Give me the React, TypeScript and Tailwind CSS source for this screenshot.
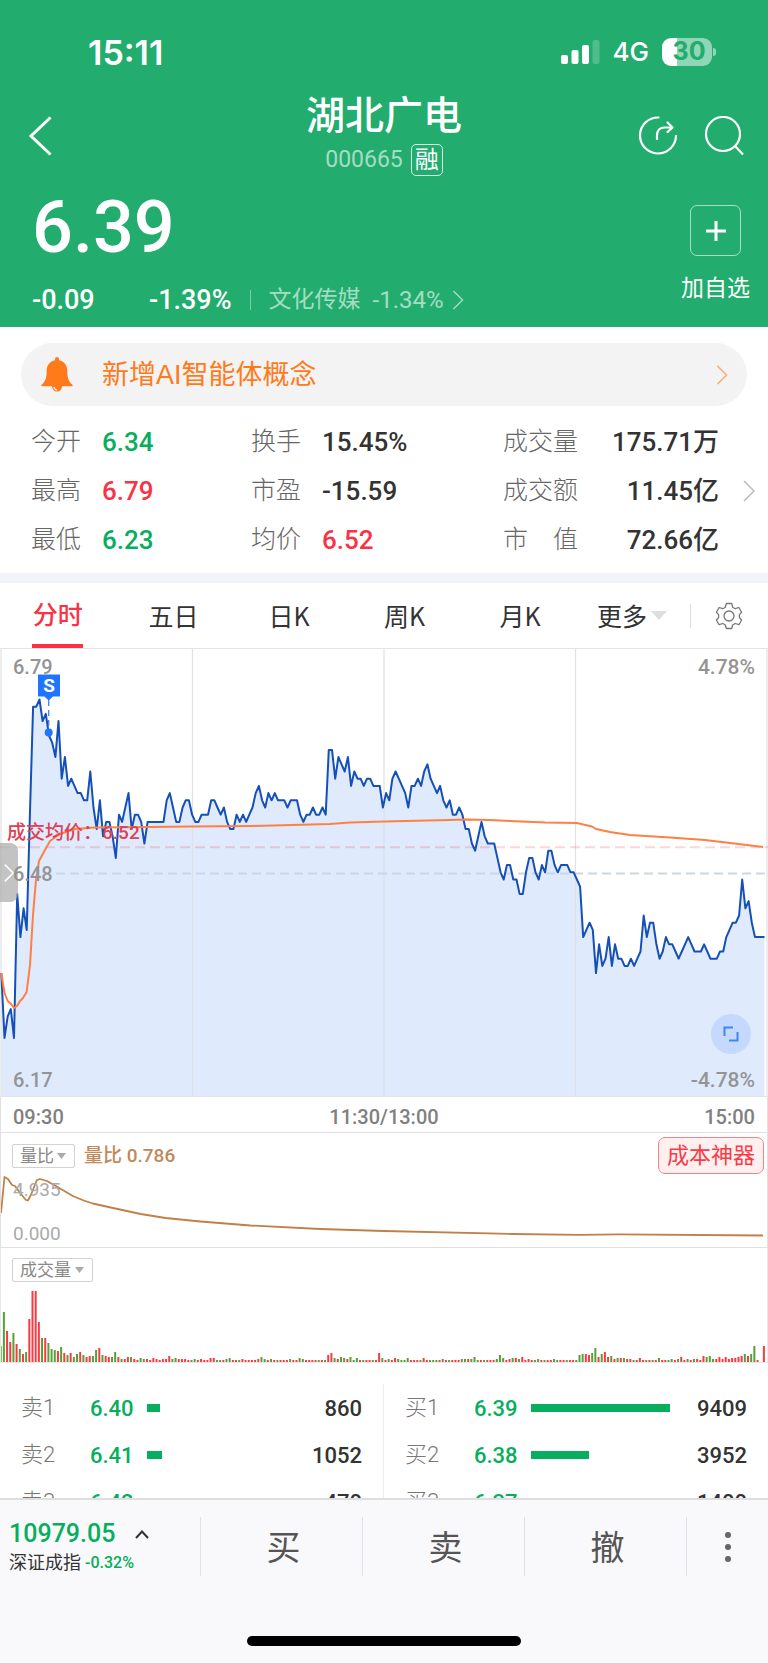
import React from "react";

const PRICES = [
  634, 625, 628, 629, 625, 645, 639, 643, 640, 656, 671, 671, 672, 669, 670, 667, 666, 664, 669, 661,
  664, 660, 661, 660, 659, 659, 658, 658, 662, 657, 654, 658, 653, 655, 655, 653, 650, 656, 655, 657,
  659, 654, 656, 656, 655, 652, 655, 655, 655, 655, 655, 655, 658, 659, 657, 655, 655, 657, 658, 658,
  656, 655, 655, 656, 656, 656, 658, 658, 657, 656, 657, 655, 654, 654, 656, 655, 656, 655, 656, 657,
  659, 660, 658, 657, 659, 658, 659, 658, 658, 658, 657, 658, 658, 658, 656, 655, 656, 656, 657, 656,
  656, 657, 656, 665, 665, 661, 664, 663, 662, 664, 660, 662, 661, 661, 660, 661, 661, 660, 660, 660,
  657, 659, 658, 661, 662, 661, 660, 659, 657, 660, 660, 661, 660, 662, 663, 661, 660, 659, 660, 658,
  657, 658, 656, 656, 657, 656, 654, 654, 652, 651, 653, 655, 653, 652, 652, 652, 650, 648, 647, 649,
  649, 647, 647, 645, 645, 648, 650, 650, 648, 647, 649, 648, 651, 651, 649, 648, 649, 649, 649, 648,
  648, 647, 646, 639, 640, 641, 640, 634, 638, 635, 636, 639, 635, 638, 636, 636, 635, 635, 636, 635,
  636, 637, 642, 639, 641, 641, 638, 636, 637, 639, 638, 638, 637, 636, 637, 638, 639, 638, 637, 637,
  637, 638, 637, 636, 636, 636, 637, 637, 639, 640, 641, 641, 642, 647, 643, 644, 641, 639, 639, 639,
  639,
];

// Positive bars are red (up minutes), negative bars are green (down minutes).
const VOLUMES = [
  -16, -50, 31, 20, -29, 18, -13, 8, -10, 43, 71, 71, 40, -24, 24, -19, -13, -12, 11, -15,
  9, -7, 9, -5, -8, 10, -7, 5, 6, -6, -12, 14, -7, 6, 5, -5, -10, 5, -3, 3,
  5, -5, 3, 2, -4, -3, 3, 2, 4, 3, 2, 3, 3, 6, -3, -4, 3, 3, 3, 2,
  -2, -3, 2, 3, 2, 2, 4, 4, -2, -2, 2, -3, -4, 2, 2, -2, 3, 2, 2, 2,
  2, 3, -5, -3, 2, -3, 2, -2, 2, 2, 2, -3, 2, 2, -4, -3, 2, 2, 2, 2,
  -2, 2, -2, 7, 9, -4, 3, -5, -4, 3, -5, -2, -4, 2, -2, 2, 2, -2, 2, 9,
  -4, 2, -3, 2, 4, -3, -2, -2, -4, 2, 2, 2, -2, 4, 2, -2, -2, -2, 2, -3,
  2, -2, 2, 2, 2, -3, -3, 3, -3, -5, -2, 2, -2, 2, 2, 2, -3, -7, -4, 2,
  3, -4, 4, -3, 5, 2, 3, 2, -2, -3, 2, -2, 2, 2, -3, -2, 2, 2, -2, 2,
  2, -2, -7, -8, 8, 7, -9, -14, 5, -8, 10, 5, -6, 3, -4, 4, -4, 3, 3, -2,
  2, 4, 2, -2, 2, -2, 2, -4, 2, 2, -2, -3, 2, -3, 5, 2, -3, 2, -3, 3,
  2, 6, -5, -6, -3, 3, 5, 3, 5, 3, 4, 4, 5, 6, -8, 6, -8, -16, 2, 0, 16,
];

const STEP = 3.18;
const pricePoints = PRICES.map((p, i) => `${(1.3 + i * STEP).toFixed(1)},${(224.3 - (p - 648) * 7.2).toFixed(1)}`).join(" ");

const stats = [
  ["今开", "6.34", "text-[#06ae5e]", "换手", "15.45%", "text-[#333]", "成交量", "175.71万"],
  ["最高", "6.79", "text-[#fa3246]", "市盈", "-15.59", "text-[#333]", "成交额", "11.45亿"],
  ["最低", "6.23", "text-[#06ae5e]", "均价", "6.52", "text-[#fa3246]", "市　值", "72.66亿"],
];

const sells = [
  { name: "卖1", price: "6.40", volume: 860 },
  { name: "卖2", price: "6.41", volume: 1052 },
  { name: "卖3", price: "6.42", volume: 470 },
];
const buys = [
  { name: "买1", price: "6.39", volume: 9409 },
  { name: "买2", price: "6.38", volume: 3952 },
  { name: "买3", price: "6.37", volume: 1400 },
];

function Chevron({ className, width = 2 }: { className: string; width?: number }) {
  return (
    <svg viewBox="0 0 12 22" className={className} fill="none" stroke="currentColor" strokeWidth={width} aria-hidden="true">
      <path d="M1 1l10 10L1 21" />
    </svg>
  );
}

function Header() {
  return (
    <header className="h-[327px] shrink-0 bg-[#22ac6e] text-white">
      <div className="flex h-[84px] items-end justify-between pr-[52px] pl-[88px]">
        <span className="flex h-[64px] items-center font-['Inter','Liberation_Sans',sans-serif] text-[34px] font-semibold">15:11</span>
        <div className="flex h-[64px] items-center gap-[13px]">
          <svg viewBox="0 0 39 25" className="h-[25px] w-[39px]" fill="currentColor" aria-label="信号">
            <rect x="0" y="15" width="7" height="9" rx="2" />
            <rect x="10.500" y="10" width="7" height="14" rx="2" />
            <rect x="21" y="5" width="7" height="19" rx="2" />
            <rect x="31.500" y="0" width="7" height="24" rx="2" opacity=".2" />
          </svg>
          <span className="font-['Inter','Liberation_Sans',sans-serif] text-[26px] leading-8 font-medium">4G</span>
          <div className="flex items-center gap-px">
            <div className="flex h-7 w-[50px] items-center justify-center rounded-[9px] bg-linear-to-r from-white from-30% to-white/50 to-30% pl-1 font-['Inter','Liberation_Sans',sans-serif] text-[25px] font-bold text-[#22ac6e]">30</div>
            <div className="h-2 w-[3px] rounded-r-full bg-white/50" />
          </div>
        </div>
      </div>

      <div className="grid h-[104px] grid-cols-[1fr_auto_1fr] items-center px-6">
        <button type="button" aria-label="返回" className="flex w-12 items-center pl-1">
          <svg viewBox="0 0 24 40" className="h-10 w-6" fill="none" stroke="currentColor" strokeWidth="3" aria-hidden="true">
            <path d="M22.500 1.500L3 20l19.500 18.500" />
          </svg>
        </button>
        <div className="flex flex-col items-center pb-2">
          <h1 className="text-[39px] leading-[56px] font-medium">湖北广电</h1>
          <div className="flex items-center gap-2">
            <span className="text-[23px] leading-8 text-white/60">000665</span>
            <span className="flex h-8 w-8 items-center justify-center rounded-[5px] border border-white/80 text-[24px] leading-8">融</span>
          </div>
        </div>
        <div className="flex items-center justify-end gap-[26px]">
          <button type="button" aria-label="分享">
            <svg viewBox="0 0 40 40" className="size-10" fill="none" stroke="currentColor" strokeWidth="2.200" strokeLinecap="round" strokeLinejoin="round" aria-hidden="true">
              <path d="M20.500 1.500A18 18 0 1 0 38 20" />
              <path d="M19 23v-3.500c0-5 3-8 7.500-8H34M29.500 6.500L34.500 11.500l-5 4.500" />
            </svg>
          </button>
          <button type="button" aria-label="搜索">
            <svg viewBox="0 0 40 40" className="size-10" fill="none" stroke="currentColor" strokeWidth="2.200" aria-hidden="true">
              <circle cx="19" cy="18" r="17" />
              <path d="M31 30l8 8.500" />
            </svg>
          </button>
        </div>
      </div>

      <div className="flex justify-between pr-[18px] pl-8">
        <div>
          <p className="pt-1 text-[72px] leading-[72px] font-medium">6.39</p>
          <div className="flex h-[72px] items-center text-[27px] font-medium">
            <span className="w-[117px]">-0.09</span>
            <span>-1.39%</span>
            <span className="mx-[18px] h-5 w-px bg-white/40" />
            <a href="#sector" className="flex items-center gap-3 text-[24px] font-normal text-white/60">
              <span className="text-[23px]">文化传媒</span>
              <span className="flex items-center gap-2">-1.34%<Chevron className="h-5 w-3" width={1.5} /></span>
            </a>
          </div>
        </div>
        <button type="button" className="flex flex-col items-center gap-[15px] self-start pt-[17px]">
          <span className="flex size-[51px] items-center justify-center rounded-[7px] border border-white/60">
            <svg viewBox="0 0 20 20" className="size-5" stroke="currentColor" strokeWidth="3" aria-hidden="true"><path d="M10 0v20M0 10h20" /></svg>
          </span>
          <span className="text-[23px] leading-9">加自选</span>
        </button>
      </div>
    </header>
  );
}

function Alert() {
  return (
    <a href="#alert" className="mx-[21px] mt-4 flex h-[63px] items-center rounded-full bg-[#f3f3f3] pr-[19px] pl-5 text-[27px] text-[#ff7a1a]">
      <svg viewBox="0 0 32 35" className="h-[35px] w-8" fill="currentColor" aria-hidden="true">
        <path d="M16 0c1.200 0 2 .8 2 2v1.200c5 1 8.300 5 8.300 10 0 7.500 1.200 11.300 4.900 14.300.9.800.5 1.800-.6 1.800H1.400c-1.100 0-1.500-1-.6-1.800 3.700-3 4.900-6.800 4.900-14.300 0-5 3.300-9 8.300-10V2c0-1.200.8-2 2-2z" />
        <path d="M11 29h10c0 3.500-2 5.500-5 5.500s-5-2-5-5.500z" />
        <path d="M13 30c.2 2 1.300 3 3 3.200" fill="none" stroke="#fff" strokeWidth="1.200" />
      </svg>
      <span className="ml-[29px] flex-1 pt-[2px] font-['Liberation_Sans','Noto_Sans_CJK_SC',sans-serif]">新增AI智能体概念</span>
      <Chevron className="h-5 w-3 text-[#ffad78]" width={1.7} />
    </a>
  );
}

function Stats() {
  return (
    <div className="flex items-center pt-[11px] pb-[9px]">
      <table className="ml-[31px] flex-1 table-fixed text-left text-[25px]">
        <tbody>
          {stats.map((r) => (
            <tr key={r[0]} className="h-[49px]">
              <th scope="row" className="w-[71px] font-light whitespace-nowrap text-[#666]">{r[0]}</th>
              <td className={`w-[149px] pt-[2px] text-[26px] font-medium ${r[2]}`}>{r[1]}</td>
              <th scope="row" className="w-[71px] font-light whitespace-nowrap text-[#666]">{r[3]}</th>
              <td className={`w-[181px] pt-[2px] text-[26px] font-medium ${r[5]}`}>{r[4]}</td>
              <th scope="row" className="w-[80px] font-light whitespace-nowrap text-[#666]">{r[6]}</th>
              <td className="pt-[2px] text-right text-[26px] font-medium whitespace-nowrap text-[#333]">{r[7]}</td>
            </tr>
          ))}
        </tbody>
      </table>
      <button type="button" aria-label="更多数据" className="flex w-[49px] justify-end pr-[13px]">
        <Chevron className="h-[22px] w-3 text-[#bbb]" width={1.5} />
      </button>
    </div>
  );
}

function Tabs() {
  return (
    <nav className="flex h-[65px] items-center font-['Noto_Sans_CJK_SC',sans-serif] text-[25px] text-[#333]">
      <button type="button" className="flex h-full flex-1 flex-col items-center justify-between font-medium text-[#fa3246]">
        <span className="flex flex-1 items-center">分时</span>
        <span className="h-1 w-[51px] bg-[#fa3246]" />
      </button>
      <button type="button" className="flex-1">五日</button>
      <button type="button" className="flex-1">日K</button>
      <button type="button" className="flex-1">周K</button>
      <button type="button" className="flex-1">月K</button>
      <div className="flex w-[190px] items-center justify-end pr-[25px]">
        <button type="button" aria-haspopup="menu" className="flex items-center gap-1">
          更多
          <svg viewBox="0 0 16 9" className="h-[9px] w-4" fill="#dcdee2" aria-hidden="true"><path d="M0 0h16L8 9z" /></svg>
        </button>
        <span className="mr-6 ml-[23px] h-6 w-px bg-[#ddd]" />
        <button type="button" aria-label="设置">
          <svg viewBox="0 0 28 28" className="size-7" fill="none" stroke="#777" strokeWidth="1.300" strokeLinejoin="round" aria-hidden="true">
            <circle cx="14" cy="14" r="5" />
            <path d="M11.300 1.500h5.400l.9 3.700 2.600 1.500 3.700-1.200 2.700 4.700-2.200 2.400v3l2.200 2.400-2.700 4.700-3.700-1.200-2.600 1.500-.9 3.500h-5.400l-.9-3.500-2.600-1.500-3.700 1.200-2.700-4.700 2.200-2.400v-3l-2.200-2.400 2.700-4.700 3.700 1.200 2.600-1.500z" />
          </svg>
        </button>
      </div>
    </nav>
  );
}

function PriceChart() {
  return (
    <section aria-label="分时走势" className="relative h-[449px] border-y border-[#e4e4e6]">
      <svg viewBox="0 1 768 447" preserveAspectRatio="none" className="block h-full w-full" fill="none">
        <polygon points={`1.300,448 ${pricePoints} 764.5,448`} fill="#dfeafd" />
        <path d="M1 0v448M192.500 0v448M384 0v448M575.500 0v448M767 0v448" stroke="#e0e1e4" strokeWidth="1.200" />
        <path d="M0 199.300H768" stroke="#fa3246" strokeOpacity=".2" strokeWidth="2" strokeDasharray="10 5" />
        <path d="M56 225.500H768" stroke="#ccd6e4" strokeWidth="1.800" strokeDasharray="9 5" />
        <polyline points={pricePoints} stroke="#1450b8" strokeWidth="2" strokeLinejoin="round" />
        <polyline
          points="1.3,325 4.5,345 7.7,353 11,356 14,360 17,358 20,353 23,350 26.6,344 30,317 33,267 36,232 39,213 45,202 50,193 60,186 75,181 95,179.500 150,179 192,178.500 250,178 330,176 350,174.500 384,173.500 450,172 465,171.500 490,172 510,173 545,174.500 577,175 592,178.500 596,181 610,184 630,187 670,189.500 705,192 730,195 755,198 763,199"
          stroke="#ff7f45" strokeWidth="2" strokeLinejoin="round"
        />
        <path d="M48.700 52v26" stroke="#3b82f6" strokeWidth="1.300" strokeDasharray="6 4" />
        <circle cx="48.700" cy="84.500" r="4" fill="#1f75ff" />
        <path d="M38 26.500h22v22h-7l-4.300 4-4.300-4H38z" fill="#1f75ff" />
        <text x="49" y="44" textAnchor="middle" fill="#fff" fontSize="19" fontWeight="700" fontFamily="Roboto">S</text>
      </svg>
      <span className="absolute top-1 left-[13px] text-[20px] leading-7 font-medium text-[#949494]">6.79</span>
      <span className="absolute top-1 right-[13px] text-[21px] leading-7 font-medium text-[#949494]">4.78%</span>
      <span className="absolute bottom-[2px] left-[13px] text-[20px] leading-7 font-medium text-[#949494]">6.17</span>
      <span className="absolute right-[13px] bottom-[2px] text-[21px] leading-7 font-medium text-[#949494]">-4.78%</span>
      <button type="button" aria-label="展开" className="absolute top-[194px] left-0 flex h-[59px] w-[18px] items-center justify-end rounded-r-[8px] bg-[#aaa]/70 pr-1 text-white">
        <Chevron className="h-5 w-[10px]" />
      </button>
      <span className="absolute top-[211px] left-[13px] text-[20px] leading-7 font-medium text-[#949494]">6.48</span>
      <span className="absolute top-[170px] left-[7px] text-[19px] leading-7 font-medium text-[#e04052]">成交均价：6.52</span>
      <button type="button" aria-label="全屏" className="absolute right-[17px] bottom-[42px] flex size-10 items-center justify-center rounded-full bg-[#c5d8fd] text-[#3f85fb]">
        <svg viewBox="0 0 16 16" className="size-4" fill="none" stroke="currentColor" strokeWidth="2" aria-hidden="true">
          <path d="M1.500 10V1.500H10M14.500 6v8.500H6" />
        </svg>
      </button>
    </section>
  );
}

function PanelSelect({ label, value, className }: { label: string; value: string; className: string }) {
  return (
    <span className="relative inline-flex items-center">
      <select aria-label={label} defaultValue={value} className={`h-6 appearance-none rounded-[2px] border border-[#d2d2d4] bg-white pl-[7px] text-[17px] leading-[22px] text-[#888] ${className}`}>
        <option>{value}</option>
      </select>
      <svg viewBox="0 0 9 6" className="pointer-events-none absolute right-[9px] h-[6px] w-[9px]" fill="#aaa" aria-hidden="true"><path d="M0 0h9L4.500 6z" /></svg>
    </span>
  );
}

function RatioPanel() {
  return (
    <section aria-label="量比" className="relative h-[115px] border-x border-b border-[#e0e0e2]">
      <svg viewBox="0 0 768 114" preserveAspectRatio="none" className="absolute inset-0 h-full w-full" fill="none">
        <polyline
          points="0,80 3.500,44 7,46 11,52 14,53 20,61 25,67 27,67.500 30,62 36,47 39,46 46,48 55,53 72,63 83,67.500 92,70.500 110,74.500 140,81 165,85 200,88.500 250,92.500 320,96 384,98 512,101 580,101.800 620,101.300 764,102.500"
          stroke="#c08048" strokeWidth="1.800" strokeLinejoin="round"
        />
      </svg>
      <div className="relative flex items-start justify-between pt-1 pr-[3px] pl-[11px]">
        <div className="flex items-center gap-[9px] pt-[5px]">
          <PanelSelect label="副图指标" value="量比" className="w-[63px]" />
          <span className="text-[19px] leading-7 font-medium text-[#c0895a]">量比 0.786</span>
        </div>
        <button type="button" className="h-[37px] rounded-[7px] border border-[#fb8088] bg-[#fff0f0] px-[8px] text-[22px] leading-[34px] text-[#fa3a46]">成本神器</button>
      </div>
      <span className="absolute top-[43px] left-[12px] text-[19px] leading-7 text-[#aaa]">4.935</span>
      <span className="absolute top-[87px] left-[12px] text-[19px] leading-7 text-[#aaa]">0.000</span>
    </section>
  );
}

function VolumePanel() {
  return (
    <section aria-label="成交量" className="flex h-[115px] flex-col justify-between border-x border-b border-[#e8e8ea]">
      <div className="pt-[10px] pl-[11px]">
        <PanelSelect label="成交量指标" value="成交量" className="w-[81px]" />
      </div>
      <svg viewBox="1 0 766 72" preserveAspectRatio="none" className="block h-[72px] w-full" aria-hidden="true">
        {VOLUMES.map((v, i) => (
          <rect key={i} x={i * STEP - 0.3} y={72 - Math.abs(v)} width="2" height={Math.abs(v)} fill={v > 0 ? "#f83b42" : "#589f38"} />
        ))}
      </svg>
    </section>
  );
}

function BookSide({ rows, label }: { rows: typeof sells; label: string }) {
  return (
    <table aria-label={label} className="w-full table-fixed text-[22px]">
      <tbody>
        {rows.map((r) => (
          <tr key={r.name} className="h-[47px]">
            <th scope="row" className="w-[90px] pl-[21px] text-left font-light text-[#777]">{r.name}</th>
            <td className="w-[57px] pt-[2px] font-medium text-[#06ae5e]">{r.price}</td>
            <td>
              <div className="h-2 bg-[#06ae5e]" style={{ width: `${(r.volume / 9409) * 97}%` }} />
            </td>
            <td className="w-[94px] pt-[2px] pr-[21px] text-right font-medium text-[#333]">{r.volume}</td>
          </tr>
        ))}
      </tbody>
    </table>
  );
}

function BottomBar() {
  return (
    <footer className="flex h-[165px] shrink-0 flex-col items-center justify-between border-t-2 border-[#dedee0] bg-[#f9f9fc] pt-[17px] pb-[17px]">
      <div className="flex h-[59px] w-full divide-x divide-[#e2e2e6] text-[34px] text-[#555]">
        <button type="button" className="flex w-[201px] shrink-0 flex-col items-start justify-center pl-[9px] text-left">
          <span className="flex items-center gap-5 text-[25px] leading-8 font-medium text-[#06ae5e]">
            10979.05
            <svg viewBox="0 0 14 9" className="h-[9px] w-[14px]" fill="none" stroke="#333" strokeWidth="2" aria-hidden="true"><path d="M1 8l6-6.500L13 8" /></svg>
          </span>
          <span className="flex items-center gap-1 text-[18px] leading-[25px] text-[#333]">
            深证成指 <span className="text-[16px] font-medium text-[#06ae5e]">-0.32%</span>
          </span>
        </button>
        <button type="button" className="flex-1 pt-1 pl-1">买</button>
        <button type="button" className="flex-1 pt-1 pl-1">卖</button>
        <button type="button" className="flex-1 pt-1 pl-1">撤</button>
        <button type="button" aria-label="更多" className="flex w-[81px] items-center justify-center">
          <svg viewBox="0 0 6 30" className="h-[30px] w-[6px]" fill="#666" aria-hidden="true"><circle cx="3" cy="3" r="3" /><circle cx="3" cy="15" r="3" /><circle cx="3" cy="27" r="3" /></svg>
        </button>
      </div>
      <div className="h-[10px] w-[274px] rounded-full bg-black" />
    </footer>
  );
}

export default function App() {
  return (
    <div className="flex h-screen flex-col bg-white font-['Roboto','Noto_Sans_CJK_SC',sans-serif]">
      <Header />
      <main className="min-h-0 flex-1 overflow-y-auto [scrollbar-width:none]">
        <Alert />
        <Stats />
        <div className="h-[10px] bg-[#f3f4fa]" />
        <Tabs />
        <PriceChart />
        <div className="flex h-9 items-center justify-between border-x border-b border-[#e0e0e2] px-3 pt-1 text-[20px] font-medium text-[#808080]">
          <span>09:30</span>
          <span>11:30/13:00</span>
          <span>15:00</span>
        </div>
        <RatioPanel />
        <VolumePanel />
        <div className="grid grid-cols-2 pt-[21px]">
          <div className="border-r border-[#eeeef0]"><BookSide rows={sells} label="卖盘" /></div>
          <BookSide rows={buys} label="买盘" />
        </div>
      </main>
      <BottomBar />
    </div>
  );
}
